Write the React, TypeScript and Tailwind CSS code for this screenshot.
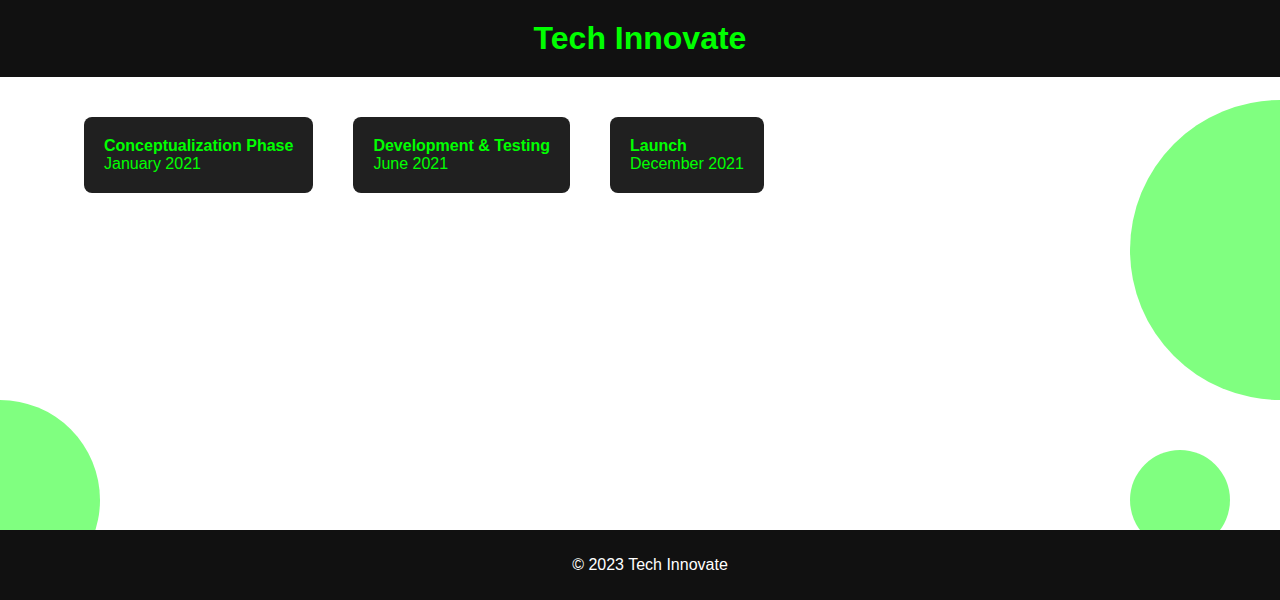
const milestones = [
  { title: "Conceptualization Phase", date: "January 2021" },
  { title: "Development & Testing", date: "June 2021" },
  { title: "Launch", date: "December 2021" },
];

export default function App() {
  return (
    <div className="relative flex min-h-screen flex-col overflow-hidden bg-white font-['Liberation_Sans',Arial,sans-serif]">
      {/* header */}
      <header className="relative z-10 bg-[#111111] py-5 text-center">
        <h1 className="text-[32px] font-bold leading-[37px] text-[#00ff00]">
          Tech Innovate
        </h1>
      </header>

      {/* timeline */}
      <main className="flex-1 px-[84px] py-10">
        <div className="flex items-start gap-10">
          {milestones.map((m) => (
            <div
              key={m.title}
              className="rounded-lg bg-[#202020] p-5 text-base leading-[18px] text-[#00ff00]"
            >
              <div className="font-bold">{m.title}</div>
              <div>{m.date}</div>
            </div>
          ))}
        </div>
      </main>

      {/* decorative circles */}
      <div className="absolute right-[-150px] top-[100px] h-[300px] w-[300px] rounded-full bg-[#80ff80]" />
      <div className="absolute left-[1130px] top-[450px] h-[100px] w-[100px] rounded-full bg-[#80ff80]" />
      <div className="absolute left-[-100px] top-[400px] h-[200px] w-[200px] rounded-full bg-[#80ff80]" />

      <footer className="relative z-10 h-[70px] bg-[#111111] pl-5 text-center text-base leading-[70px] text-white">
        © 2023 Tech Innovate
      </footer>
    </div>
  );
}
